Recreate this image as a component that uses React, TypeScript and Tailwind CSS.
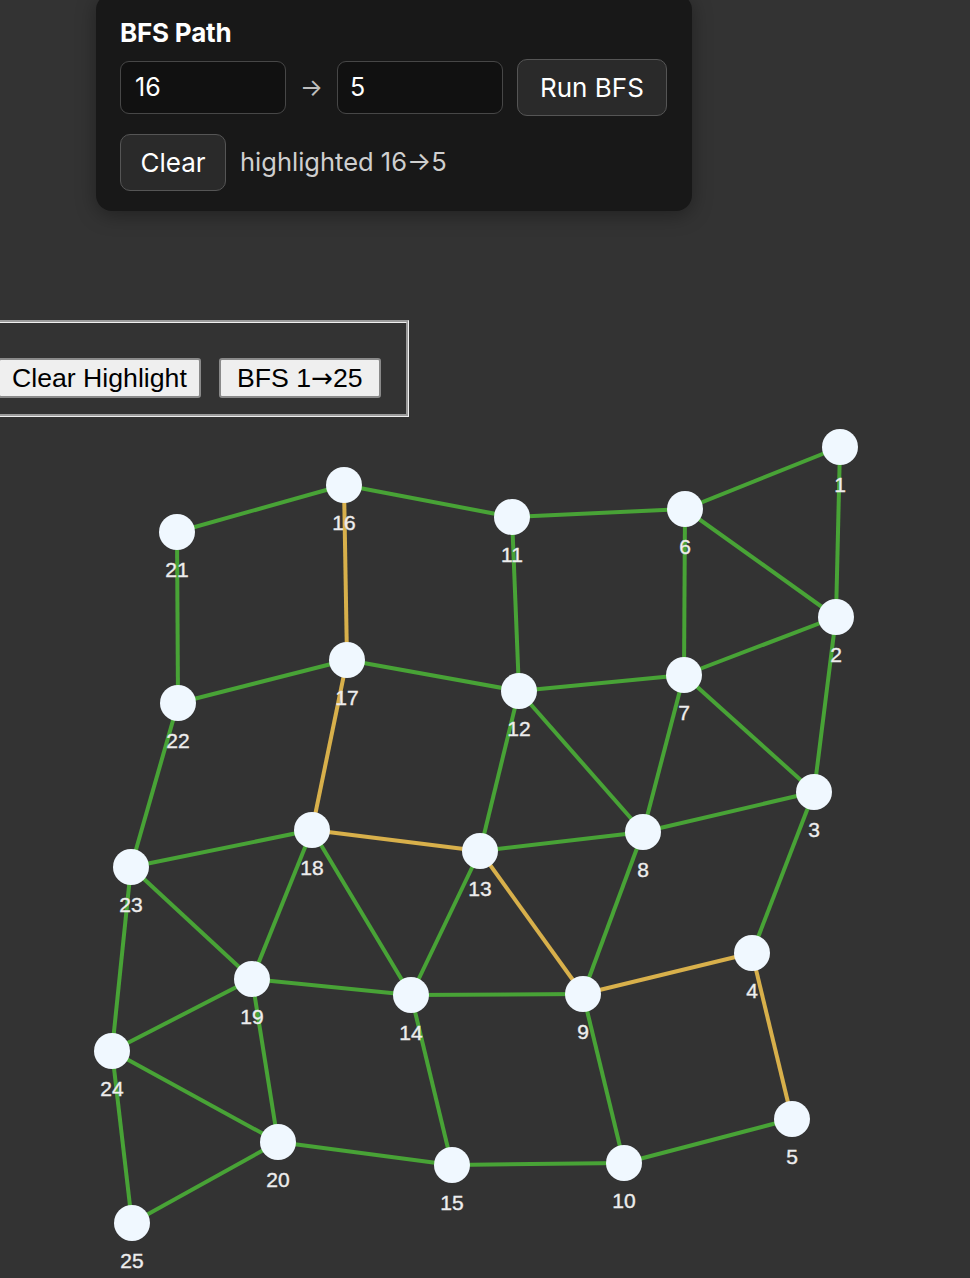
import React from "react";

const nodes: Record<number, [number, number]> = {
  1: [840, 447],
  2: [836, 617],
  3: [814, 792],
  4: [752, 953],
  5: [792, 1119],
  6: [685, 509],
  7: [684, 675],
  8: [643, 832],
  9: [583, 994],
  10: [624, 1163],
  11: [512, 517],
  12: [519, 691],
  13: [480, 851],
  14: [411, 995],
  15: [452, 1165],
  16: [344, 485],
  17: [347, 660],
  18: [312, 830],
  19: [252, 979],
  20: [278, 1142],
  21: [177, 532],
  22: [178, 703],
  23: [131, 867],
  24: [112, 1051],
  25: [132, 1223],
};

const edges: [number, number][] = [
  [1, 6], [1, 2], [6, 2], [6, 11], [11, 16], [16, 21], [16, 17], [11, 12],
  [6, 7], [2, 7], [2, 3], [7, 3], [7, 12], [7, 8], [12, 17], [17, 22],
  [21, 22], [12, 8], [12, 13], [3, 8], [8, 13], [8, 9], [3, 4], [17, 18],
  [22, 23], [23, 18], [18, 13], [13, 9], [9, 4], [4, 5], [18, 19], [18, 14],
  [13, 14], [23, 19], [19, 14], [14, 9], [23, 24], [24, 19], [19, 20],
  [24, 20], [24, 25], [25, 20], [20, 15], [14, 15], [15, 10], [9, 10], [10, 5],
];

const path = [16, 17, 18, 13, 9, 4, 5];
const isPath = (a: number, b: number) => {
  for (let i = 0; i < path.length - 1; i++) {
    if ((path[i] === a && path[i + 1] === b) || (path[i] === b && path[i + 1] === a)) return true;
  }
  return false;
};

export default function App() {
  const top = 417;
  return (
    <div className="min-h-screen w-[970px] overflow-hidden bg-[#333333]" style={{ fontFamily: "Inter, 'Liberation Sans', sans-serif" }}>
      <div className="ml-[96px] mt-[-6px] w-fit rounded-[16px] bg-[#181818] pl-6 pr-[25px] pt-6 pb-5 shadow-[0_4px_20px_rgba(0,0,0,0.35)]">
        <div className="text-[26px] font-bold leading-[29px] tracking-[-0.2px] text-white">BFS Path</div>
        <div className="mt-3 flex items-center">
          <div className="flex h-[53px] w-[166px] items-center rounded-[9px] border-[1.5px] border-[#474747] bg-[#111111] pl-[14px] text-[25px] text-white">16</div>
          <span className="mx-[14px] text-[24px] text-[#bdbdbd]">→</span>
          <div className="flex h-[53px] w-[166px] items-center rounded-[9px] border-[1.5px] border-[#474747] bg-[#111111] pl-[12px] text-[25px] text-white">5</div>
          <button className="ml-[14px] h-[57px] w-[150px] rounded-[10px] border-[1.5px] border-[#555555] bg-[#2a2a2a] text-[26px] text-white">Run BFS</button>
        </div>
        <div className="mt-[18px] flex items-center">
          <button className="h-[57px] w-[106px] rounded-[10px] border-[1.5px] border-[#555555] bg-[#2a2a2a] text-[26px] text-white">Clear</button>
          <span className="ml-[14px] text-[25.5px] text-[#cfcfcf]">highlighted 16→5</span>
        </div>
      </div>

      <div className="ml-[-30px] mt-[109px] w-fit border-[3px] border-[#f0f0f0] [border-style:groove] pl-[25px] pr-[25px] pt-[35px] pb-[16px]">
        <div className="flex gap-[18px]" style={{ fontFamily: "'Liberation Sans', Arial, sans-serif" }}>
          <button className="h-[40px] rounded-[3px] border-2 border-[#8a8a8a] bg-[#efefef] px-[12px] text-[26.67px] leading-none text-black">Clear Highlight</button>
          <button className="h-[40px] w-[162px] rounded-[3px] border-2 border-[#8a8a8a] bg-[#efefef] px-[12px] text-[26.67px] leading-none text-black">
            BFS 1<span style={{ fontFamily: "'DejaVu Sans', sans-serif" }} className="text-[26px]">→</span>25
          </button>
        </div>
      </div>

      <svg className="block" width={970} height={1278 - top} viewBox={`0 ${top} 970 ${1278 - top}`}>
        {edges.map(([a, b], i) => {
          const [x1, y1] = nodes[a];
          const [x2, y2] = nodes[b];
          return (
            <line
              key={i}
              x1={x1}
              y1={y1}
              x2={x2}
              y2={y2}
              stroke={isPath(a, b) ? "#d8b04b" : "#48a336"}
              strokeWidth={4}
            />
          );
        })}
        {Object.entries(nodes).map(([id, [x, y]]) => (
          <circle key={id} cx={x} cy={y} r={18} fill="#f0f8ff" />
        ))}
        {Object.entries(nodes).map(([id, [x, y]]) => (
          <text
            key={"t" + id}
            x={x}
            y={y + 45}
            textAnchor="middle"
            fill="#f0f0f0"
            stroke="#e6e6e6"
            strokeWidth={0.4}
            fontSize={21}
            style={{ fontFamily: "'Liberation Sans', Arial, sans-serif" }}
          >
            {id}
          </text>
        ))}
      </svg>
    </div>
  );
}
